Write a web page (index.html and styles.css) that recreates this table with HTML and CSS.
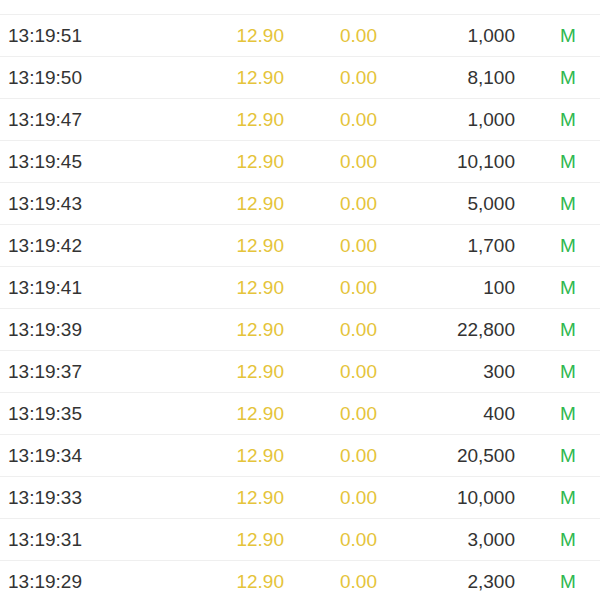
FILE: index.html
```html
<!DOCTYPE html>
<html lang="en">
<head>
<meta charset="utf-8">
<title>Trades</title>
<link rel="stylesheet" href="styles.css">
</head>
<body>
<div class="list">
  <div class="row"><span class="time">13:19:52</span><span class="price">12.90</span><span class="chg">0.00</span><span class="vol">200</span><span class="flag">M</span></div>
  <div class="row"><span class="time">13:19:51</span><span class="price">12.90</span><span class="chg">0.00</span><span class="vol">1,000</span><span class="flag">M</span></div>
  <div class="row"><span class="time">13:19:50</span><span class="price">12.90</span><span class="chg">0.00</span><span class="vol">8,100</span><span class="flag">M</span></div>
  <div class="row"><span class="time">13:19:47</span><span class="price">12.90</span><span class="chg">0.00</span><span class="vol">1,000</span><span class="flag">M</span></div>
  <div class="row"><span class="time">13:19:45</span><span class="price">12.90</span><span class="chg">0.00</span><span class="vol">10,100</span><span class="flag">M</span></div>
  <div class="row"><span class="time">13:19:43</span><span class="price">12.90</span><span class="chg">0.00</span><span class="vol">5,000</span><span class="flag">M</span></div>
  <div class="row"><span class="time">13:19:42</span><span class="price">12.90</span><span class="chg">0.00</span><span class="vol">1,700</span><span class="flag">M</span></div>
  <div class="row"><span class="time">13:19:41</span><span class="price">12.90</span><span class="chg">0.00</span><span class="vol">100</span><span class="flag">M</span></div>
  <div class="row"><span class="time">13:19:39</span><span class="price">12.90</span><span class="chg">0.00</span><span class="vol">22,800</span><span class="flag">M</span></div>
  <div class="row"><span class="time">13:19:37</span><span class="price">12.90</span><span class="chg">0.00</span><span class="vol">300</span><span class="flag">M</span></div>
  <div class="row"><span class="time">13:19:35</span><span class="price">12.90</span><span class="chg">0.00</span><span class="vol">400</span><span class="flag">M</span></div>
  <div class="row"><span class="time">13:19:34</span><span class="price">12.90</span><span class="chg">0.00</span><span class="vol">20,500</span><span class="flag">M</span></div>
  <div class="row"><span class="time">13:19:33</span><span class="price">12.90</span><span class="chg">0.00</span><span class="vol">10,000</span><span class="flag">M</span></div>
  <div class="row"><span class="time">13:19:31</span><span class="price">12.90</span><span class="chg">0.00</span><span class="vol">3,000</span><span class="flag">M</span></div>
  <div class="row"><span class="time">13:19:29</span><span class="price">12.90</span><span class="chg">0.00</span><span class="vol">2,300</span><span class="flag">M</span></div>
</div>
</body>
</html>
```
FILE: styles.css
```css
html, body {
  margin: 0;
  padding: 0;
  background: #ffffff;
  overflow: hidden;
}
.list {
  margin-top: -27px;
  font-family: "Liberation Sans", Arial, sans-serif;
  font-size: 19px;
  color: #333333;
}
.row {
  display: grid;
  grid-template-columns: 200px 76px 93px 138px 1fr;
  padding-left: 8px;
  height: 41px;
  line-height: 41px;
  border-bottom: 1px solid #efefef;
}
.price, .chg {
  text-align: right;
  color: #e5c43a;
}
.vol {
  text-align: right;
}
.flag {
  padding-left: 45px;
  color: #2fb84f;
}
```
